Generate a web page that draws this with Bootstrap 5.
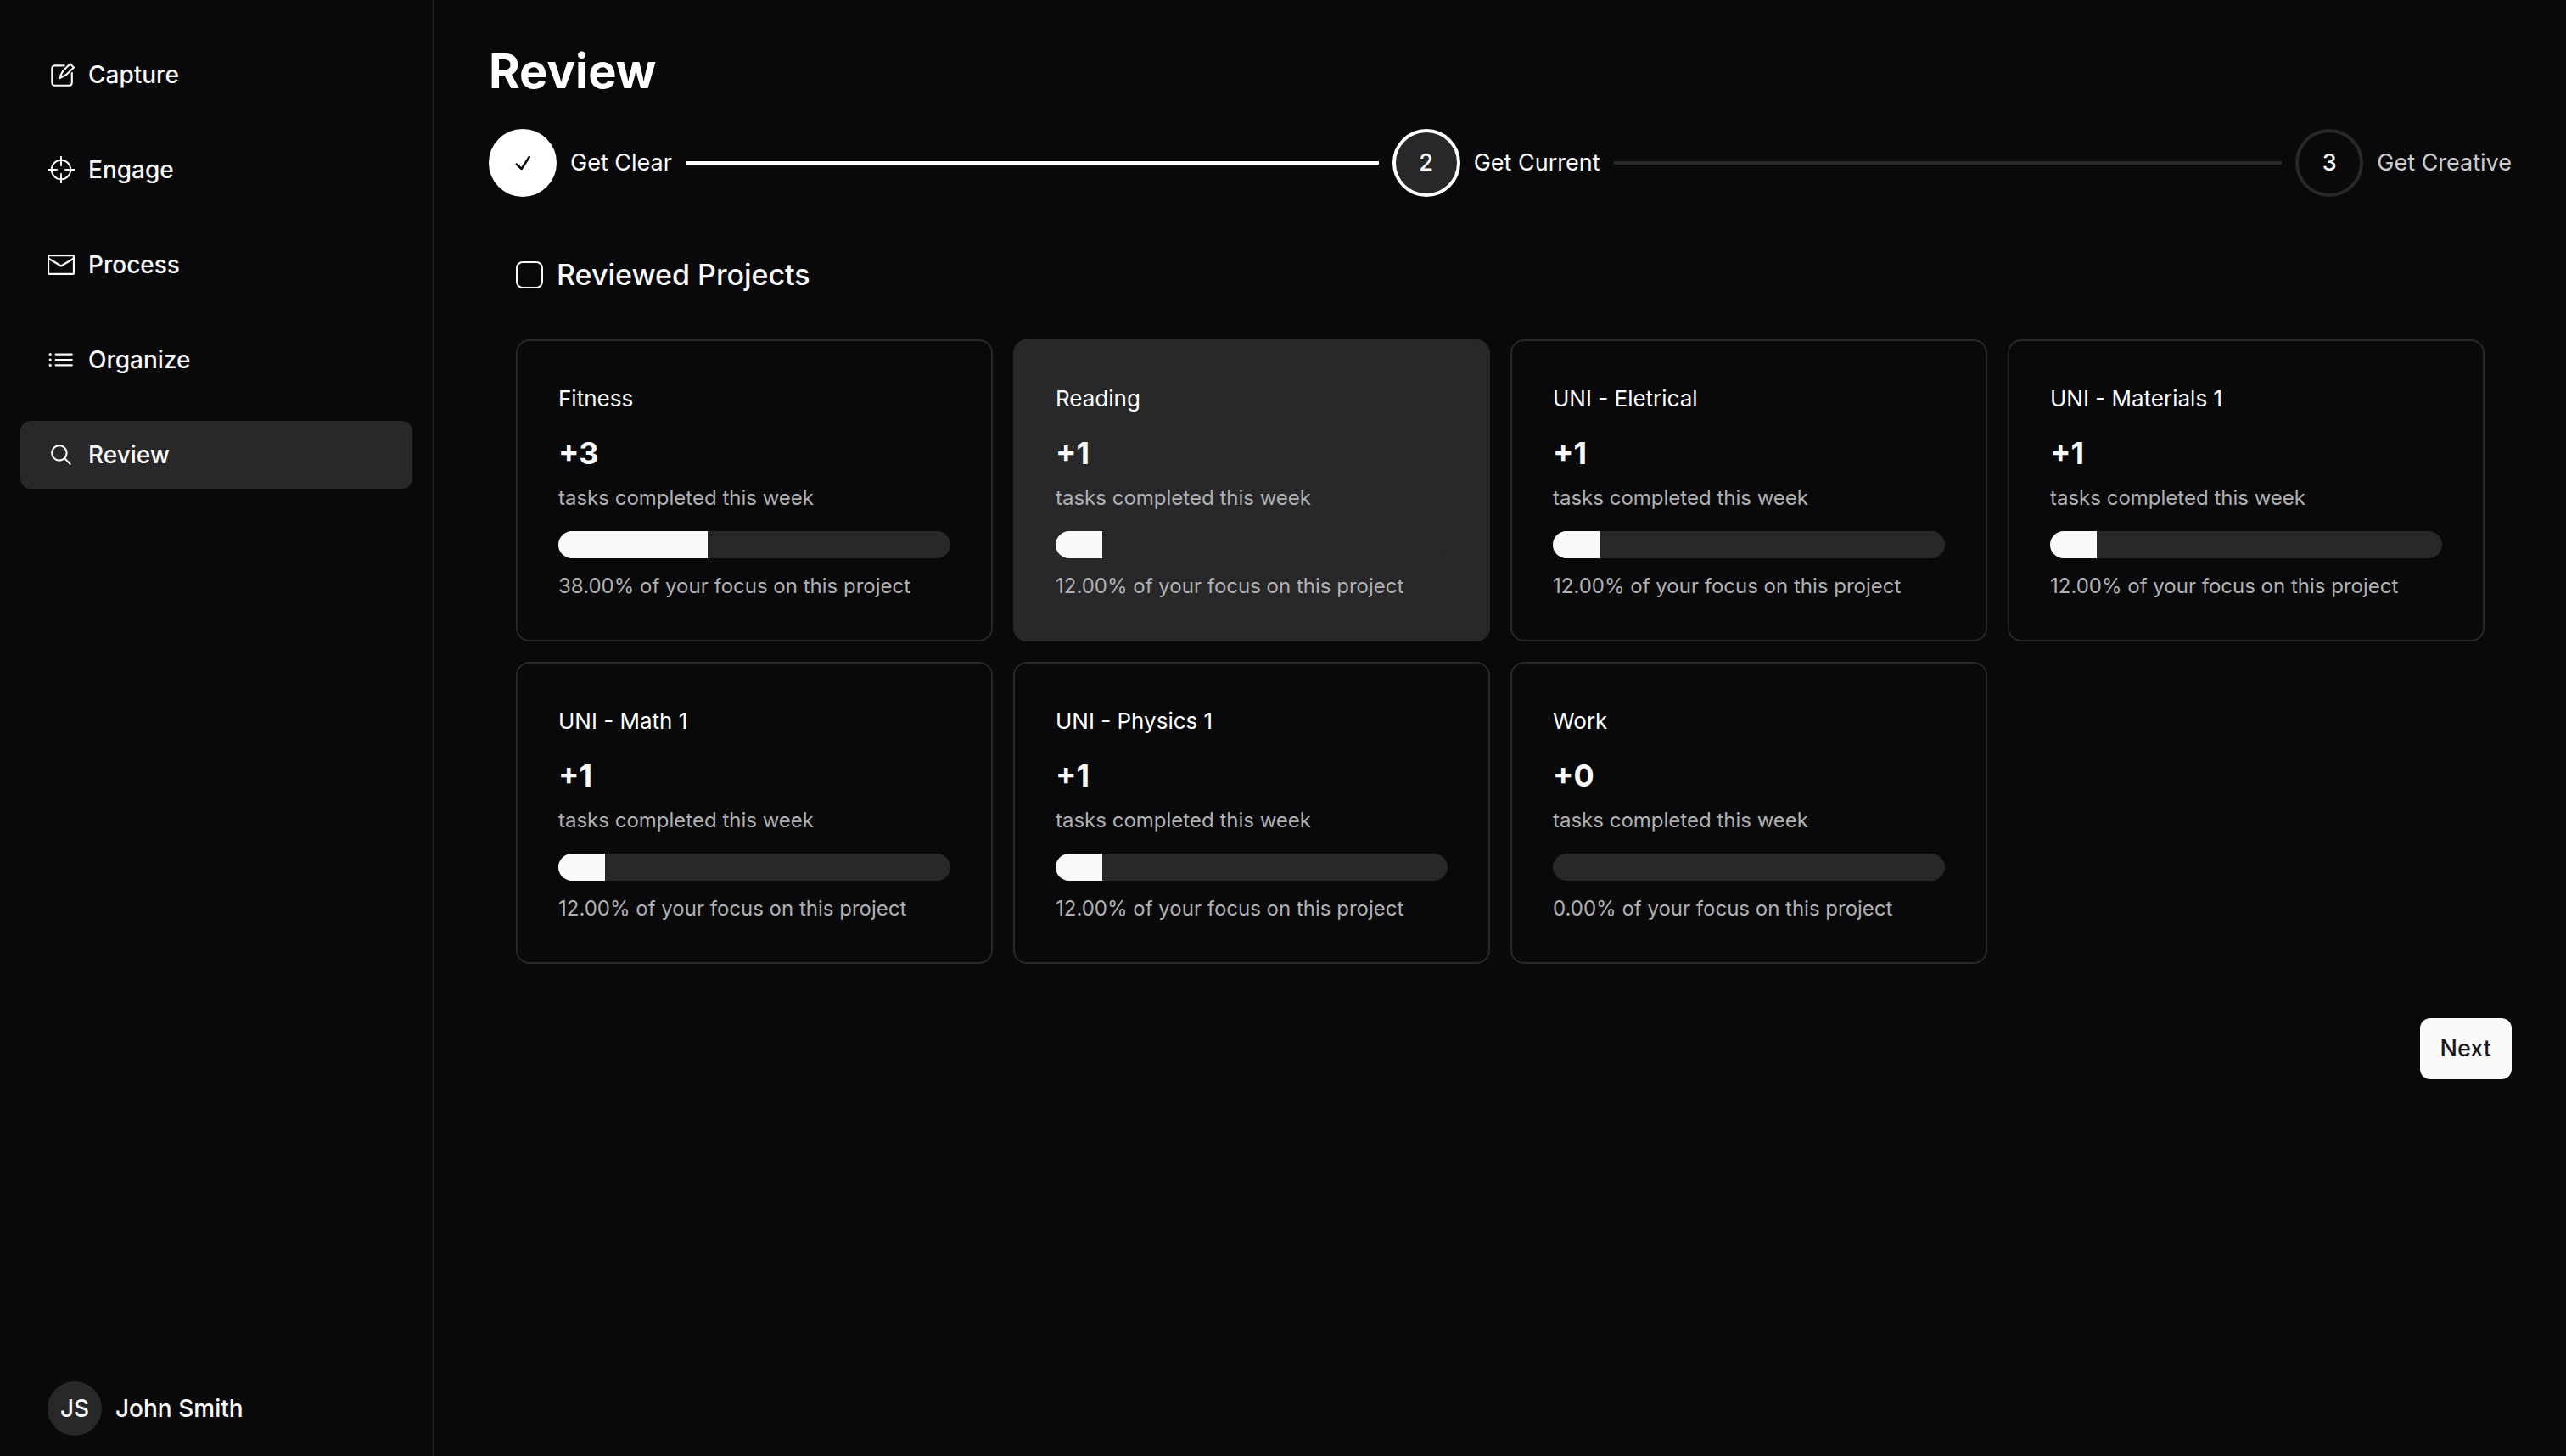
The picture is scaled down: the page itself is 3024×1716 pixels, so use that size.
<!DOCTYPE html>
<html lang="en" data-bs-theme="dark">
<head>
<meta charset="utf-8">
<meta name="viewport" content="width=device-width, initial-scale=1">
<title>Review</title>
<link href="https://cdn.jsdelivr.net/npm/bootstrap@5.3.0/dist/css/bootstrap.min.css" rel="stylesheet">
<style>
  :root { --ink: #fafafa; --ground: #09090b; --raised: #28282a; --dim: #b0b0b2; }
  body { background: var(--ground); color: var(--ink); font-family: Inter, "Liberation Sans", sans-serif; font-size: 28px; line-height: 40px; }
  .side { width: 512px; border-right: 2px solid var(--raised); padding: 48px 24px 24px; }
  .side-nav { gap: 32px; }
  .side-nav .nav-link { gap: 16px; height: 80px; padding: 0 32px; border-radius: 12px; color: var(--ink); font-weight: 500; }
  .side-nav .nav-link.active { background: var(--raised); }
  .glyph { width: 32px; height: 32px; flex: none; }
  .user { gap: 16px; padding: 0 32px; font-weight: 500; }
  .avatar { width: 64px; height: 64px; background: var(--raised); }
  .page { padding: 48px 64px; min-width: 0; }
  .page-title { font-size: 56px; line-height: 72px; font-weight: 700; margin: 0 0 32px; }
  .steps { gap: 16px; margin-bottom: 64px; font-size: 27px; }
  .step { gap: 16px; }
  .step-dot { width: 80px; height: 80px; border: 4px solid var(--raised); font-weight: 500; flex: none; }
  .step-dot.current { background: var(--raised); border-color: #fff; }
  .step-dot.done { background: #fff; border-color: #fff; color: var(--ground); }
  .step-line { height: 4px; background: var(--raised); }
  .step-line.done { background: #fff; }
  .later { color: #cbcbcd; }
  .section-body { padding: 0 32px; }
  .review-check { gap: 16px; margin-bottom: 48px; font-size: 34px; line-height: 56px; font-weight: 500; }
  .review-check .form-check-input { width: 32px; height: 32px; margin: 0; border: 2px solid var(--ink); border-radius: 8px; background-color: transparent; }
  .projects { --bs-gutter-x: 24px; --bs-gutter-y: 24px; }
  .project { background: transparent; border: 2px solid var(--raised); border-radius: 16px; color: var(--ink); }
  .project.picked { background: var(--raised); }
  .project .card-body { padding: 48px 48px 46px; }
  .project-name { font-size: 26px; line-height: 40px; font-weight: 400; margin: 0 0 16px; }
  .project-count { font-size: 36px; line-height: 56px; font-weight: 700; margin: 0 0 8px; }
  .project-note { font-size: 24px; line-height: 34px; color: var(--dim); margin: 0; }
  .project .progress { height: 32px; margin: 22px 0 16px; border-radius: 16px; background: var(--raised); }
  .project .progress-bar { background: var(--ink); }
  .next { margin-top: 64px; padding: 16px 24px; border: 0; border-radius: 12px; background: var(--ink); color: #18181b; font-size: 27px; line-height: 40px; font-weight: 500; }
</style>
<script src="https://cdn.jsdelivr.net/npm/bootstrap@5.3.0/dist/js/bootstrap.bundle.min.js"></script>
</head>
<body>
<div class="d-flex min-vh-100">
  <aside class="side d-flex flex-column justify-content-between flex-shrink-0">
    <nav class="side-nav nav flex-column">
      <a class="nav-link d-flex align-items-center" href="#">
        <svg class="glyph" viewBox="0 0 15 15" fill="none" stroke="currentColor" stroke-linejoin="round" stroke-linecap="round" aria-hidden="true"><path d="M9.2 2.5H4.2Q2.5 2.5 2.5 4.2V11.8Q2.5 13.5 4.2 13.5H11.8Q13.5 13.5 13.5 11.8V6.6"/><path d="M12.5 1.5L14.5 3.5L10.4 7.5L6.5 9.5L8.5 5.5Z"/></svg>
        Capture</a>
      <a class="nav-link d-flex align-items-center" href="#">
        <svg class="glyph" viewBox="0 0 15 15" fill="none" stroke="currentColor" stroke-width=".9" aria-hidden="true"><circle cx="7.5" cy="7.5" r="5.3"/><path d="M7.5 0V5.5M7.5 9.5V15M0 7.5H5.5M9.5 7.5H15"/></svg>
        Engage</a>
      <a class="nav-link d-flex align-items-center" href="#">
        <svg class="glyph" viewBox="0 0 15 15" fill="none" stroke="currentColor" stroke-linejoin="round" aria-hidden="true"><rect x=".5" y="2.4" width="14" height="10.2" rx=".3"/><path d="M.6 4.1L7.5 8.2L14.4 4.1"/></svg>
        Process</a>
      <a class="nav-link d-flex align-items-center" href="#">
        <svg class="glyph" viewBox="0 0 15 15" fill="currentColor" aria-hidden="true"><circle cx="1.5" cy="4.5" r=".75"/><circle cx="1.5" cy="7.5" r=".75"/><circle cx="1.5" cy="10.5" r=".75"/><path d="M4.5 4.5H13.5M4.5 7.5H13.5M4.5 10.5H13.5" stroke="currentColor" stroke-linecap="round"/></svg>
        Organize</a>
      <a class="nav-link active d-flex align-items-center" href="#" aria-current="page">
        <svg class="glyph" viewBox="0 0 15 15" fill="none" stroke="currentColor" stroke-linecap="round" aria-hidden="true"><circle cx="6.5" cy="6.5" r="4.1"/><path d="M9.5 9.5L12.5 12.5"/></svg>
        Review</a>
    </nav>
    <div class="user d-flex align-items-center">
      <span class="avatar rounded-circle d-flex align-items-center justify-content-center">JS</span>
      <span>John Smith</span>
    </div>
  </aside>

  <main class="page flex-grow-1">
    <h1 class="page-title">Review</h1>

    <div class="steps d-flex align-items-center">
      <div class="step d-flex align-items-center flex-fill w-100">
        <span class="step-dot done rounded-circle d-flex align-items-center justify-content-center">
          <svg class="glyph" viewBox="0 0 15 15" fill="none" stroke="currentColor" stroke-width="1.25" stroke-linecap="round" stroke-linejoin="round" aria-hidden="true"><path d="M4.12 8.25L6.87 10.75L11.12 4.25"/></svg>
        </span>
        <span class="text-nowrap">Get Clear</span>
        <span class="step-line done flex-grow-1"></span>
      </div>
      <div class="step d-flex align-items-center flex-fill w-100">
        <span class="step-dot current rounded-circle d-flex align-items-center justify-content-center">2</span>
        <span class="text-nowrap">Get Current</span>
        <span class="step-line flex-grow-1"></span>
      </div>
      <div class="step d-flex align-items-center flex-shrink-0">
        <span class="step-dot rounded-circle d-flex align-items-center justify-content-center">3</span>
        <span class="later text-nowrap">Get Creative</span>
      </div>
    </div>

    <section class="section-body">
      <div class="review-check d-flex align-items-center">
        <input class="form-check-input" type="checkbox" id="reviewed">
        <label for="reviewed">Reviewed Projects</label>
      </div>
      <div class="projects row row-cols-4">
        <div class="col"><div class="project card"><div class="card-body">
          <h2 class="project-name">Fitness</h2><p class="project-count">+3</p><p class="project-note">tasks completed this week</p>
          <div class="progress"><div class="progress-bar" style="width:38%"></div></div>
          <p class="project-note">38.00% of your focus on this project</p></div></div></div>
        <div class="col"><div class="project picked card"><div class="card-body">
          <h2 class="project-name">Reading</h2><p class="project-count">+1</p><p class="project-note">tasks completed this week</p>
          <div class="progress"><div class="progress-bar" style="width:12%"></div></div>
          <p class="project-note">12.00% of your focus on this project</p></div></div></div>
        <div class="col"><div class="project card"><div class="card-body">
          <h2 class="project-name">UNI - Eletrical</h2><p class="project-count">+1</p><p class="project-note">tasks completed this week</p>
          <div class="progress"><div class="progress-bar" style="width:12%"></div></div>
          <p class="project-note">12.00% of your focus on this project</p></div></div></div>
        <div class="col"><div class="project card"><div class="card-body">
          <h2 class="project-name">UNI - Materials 1</h2><p class="project-count">+1</p><p class="project-note">tasks completed this week</p>
          <div class="progress"><div class="progress-bar" style="width:12%"></div></div>
          <p class="project-note">12.00% of your focus on this project</p></div></div></div>
        <div class="col"><div class="project card"><div class="card-body">
          <h2 class="project-name">UNI - Math 1</h2><p class="project-count">+1</p><p class="project-note">tasks completed this week</p>
          <div class="progress"><div class="progress-bar" style="width:12%"></div></div>
          <p class="project-note">12.00% of your focus on this project</p></div></div></div>
        <div class="col"><div class="project card"><div class="card-body">
          <h2 class="project-name">UNI - Physics 1</h2><p class="project-count">+1</p><p class="project-note">tasks completed this week</p>
          <div class="progress"><div class="progress-bar" style="width:12%"></div></div>
          <p class="project-note">12.00% of your focus on this project</p></div></div></div>
        <div class="col"><div class="project card"><div class="card-body">
          <h2 class="project-name">Work</h2><p class="project-count">+0</p><p class="project-note">tasks completed this week</p>
          <div class="progress"><div class="progress-bar" style="width:0%"></div></div>
          <p class="project-note">0.00% of your focus on this project</p></div></div></div>
      </div>
    </section>

    <div class="d-flex justify-content-end">
      <button class="next btn" type="button">Next</button>
    </div>
  </main>
</div>
</body>
</html>
